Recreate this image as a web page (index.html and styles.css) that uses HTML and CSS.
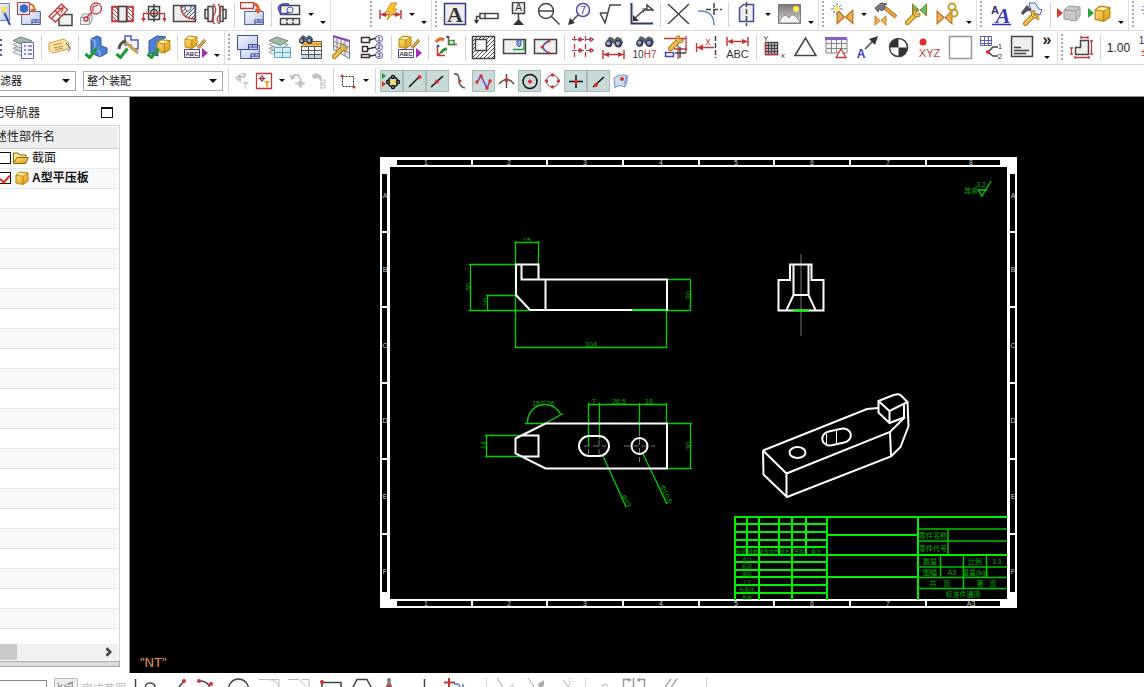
FILE: index.html
```html
<!DOCTYPE html>
<html lang="zh-CN">
<head>
    <meta charset="utf-8">
    <title>A型平压板</title>
    <link rel="stylesheet" href="styles.css">
</head>
<body>
    <!-- Shared icon parts -->
    <svg class="defs" width="0" height="0" aria-hidden="true">
        <defs>
            <linearGradient id="pale" x1="0" y1="0" x2="1" y2="1"><stop offset="0" stop-color="#f4f7ff"/><stop offset="1" stop-color="#b9c6e8"/></linearGradient>
            <linearGradient id="gold" x1="0" y1="0" x2="1" y2="1"><stop offset="0" stop-color="#ffe680"/><stop offset="1" stop-color="#dd9510"/></linearGradient>
            <linearGradient id="photo" x1="0" y1="0" x2="0" y2="1"><stop offset="0" stop-color="#777"/><stop offset="1" stop-color="#ddd"/></linearGradient>
            <pattern id="hatch" width="4" height="4" patternUnits="userSpaceOnUse"><path d="M-1 1L1 -1M0 4L4 0M3 5L5 3" stroke="#555" fill="none"/></pattern>
            <pattern id="hatch-red" width="4" height="4" patternUnits="userSpaceOnUse"><path d="M-1 3L1 5M0 0L4 4M3 -1L5 1" stroke="#c33" fill="none"/></pattern>
        </defs>
        <symbol id="sheet" viewBox="0 0 21 15"><path d="M.5 .5h20v14H.5z" fill="url(#pale)" stroke="#3c4a94"/><path d="M11.500 14V9.500h9M11.500 12h9M15.500 9.500v2.500" stroke="#3c4a94" fill="none"/></symbol>
        <symbol id="cube" viewBox="0 0 14 14"><path d="M1 4L5 1l8 1v8l-5 3.500L1 12z" fill="url(#gold)" stroke="#b8860b"/><path d="M1 4l7 1 5-3M8 5v8" stroke="#b8860b" fill="none"/><path d="M2 4l3.500-2 6 .8L8 4.500z" fill="#fff3b0"/></symbol>
        <symbol id="check" viewBox="0 0 14 12"><path d="M1.500 7l4 3.500L12.500 1.500" stroke="#1f9a32" stroke-width="3" fill="none"/></symbol>
        <symbol id="glasses" viewBox="0 0 23 14"><path d="M2 7L6 1l4 1 2 2 3-3 5 2 2 5-4 5-5-2-3-3-3 4-6-1z" fill="#59606c"/><circle cx="5.500" cy="9" r="4" fill="#343a46"/><circle cx="16.500" cy="9" r="4.200" fill="#343a46"/><circle cx="5" cy="8.500" r="2.300" fill="#8fa4d4"/><circle cx="16" cy="8.500" r="2.400" fill="#8fa4d4"/></symbol>
        <symbol id="wrench" viewBox="0 0 16 16"><path d="M2.500 13.500L9 7" stroke="#a77b17" stroke-width="5" stroke-linecap="round"/><path d="M2.500 13.500L9 7" stroke="#edc54c" stroke-width="3" stroke-linecap="round"/><path d="M9 1L8 5l3 3 4-1v-3l-3 1.500L10.500 4.500 12 1z" fill="#f2cf58" stroke="#a77b17"/></symbol>
        <symbol id="hammer" viewBox="0 0 24 17"><path d="M10 5l12 10" stroke="#996318" stroke-width="4"/><path d="M10 5l12 10" stroke="#e3a548" stroke-width="2.500"/><path d="M1 6l6-5 6 1-3 1 1 3-3 3-3-2-1 3z" fill="#777d86" stroke="#555"/></symbol>
        <symbol id="bow" viewBox="0 0 16 14"><path d="M1 1l6.500 6L1 13zM15 1L8.500 7l6.500 6z" fill="currentColor" stroke="#b76b1a"/></symbol>
        <symbol id="layers" viewBox="0 0 23 24"><path d="M1 18l8-4 12 4-8 5z" fill="#eee" stroke="#999"/><path d="M1 14l8-4 12 4-8 5z" fill="#cbd6ce" stroke="#8b968f"/><path d="M1 10l8-4 12 4-8 5z" fill="#eef2ef" stroke="#8b968f"/><path d="M1 6l8-4 12 4-8 5z" fill="#9fb8ab" stroke="#6f877b"/></symbol>
        <symbol id="dim" viewBox="0 0 23 9"><path d="M1 0v9M22 0v9M2 4.500h19" stroke="#bf3a36" stroke-width="1.500" fill="none"/><path d="M1 4.500L7 2v5zM22 4.500L16 2v5z" fill="#bf3a36"/></symbol>
        <symbol id="star" viewBox="0 0 12 12"><path d="M6 0v12M0 6h12M2 2l8 8M10 2l-8 8" stroke="#5d7c9b" fill="none"/><circle cx="6" cy="6" r="2.800" fill="#ffef7a"/></symbol>
        <symbol id="label" viewBox="0 0 25 25"><use href="#cube" x="1" y="0" width="14" height="14"/><path d="M15 13l7-8" stroke="#8c5a1b" stroke-width="3"/><path d="M15 13l7-8" stroke="#f0b458" stroke-width="1.500"/><path d="M1.500 14.500h15v8h-15z" fill="#fff" stroke="#5b3aa0"/><text x="9" y="21" class="tiny">ABC</text><path d="M19 13l6 5-6 5z" fill="#a033b0"/></symbol>
    </svg>

    <header>
        <div class="bar bar-top">
            <div class="group from-17">
                <button class="tool" aria-label="向导"><svg viewBox="0 0 25 25"><path d="M12.500 1.500h11v17h-11z" fill="url(#pale)" stroke="#7a86b8"/><path d="M17 8l7 15" stroke="#3b45b5" stroke-width="2"/><path d="M14 5h8l-4 7z" fill="#ffe15a"/></svg></button>
                <button class="tool" aria-label="基本视图"><svg viewBox="0 0 25 25"><use href="#sheet" x="4" y="9" width="20" height="14"/><path d="M.5 .5h12v12H.5z" fill="#dbe6f8" stroke="#c33"/><path d="M3 4l4-2 4 2v5l-4 2-4-2z" fill="#3b6cc0"/><path d="M13 2q5 1 4 6" stroke="#d9672c" stroke-width="2"/><path d="M13 7h7l-4 4z" fill="#d9672c"/></svg></button>
                <button class="tool" aria-label="投影视图"><svg viewBox="0 0 25 25"><path d="M11 23.500v-7l4-4h9v11z" fill="#f0f0f0" class="dark"/><path d="M1 14.500L13.500 2l6 6-12 12z" fill="#fff" class="red"/><path d="M7 8.500l6 6M4 16l12-12M10 6l5 1-2 4" class="red"/></svg></button>
                <button class="tool" aria-label="局部放大图"><svg viewBox="0 0 25 25"><path d="M1.500 15.500h9v7h-9zM2 15l2-3h9l-2 3M11 22l2-3v-7" fill="#eee" stroke="#999"/><circle cx="17" cy="6.500" r="5.500" fill="#f3f3f3" class="red"/><path d="M14 9V5l5-2M8 15l5-5" class="red"/><circle cx="7" cy="17" r="2" class="red"/></svg></button>
                <button class="tool" aria-label="剖视图"><svg viewBox="0 0 25 25"><path d="M2 4.500h21v15H2z" fill="#fff" class="red"/><path d="M2 5h6v14H2zM17 5h6v14h-6z" fill="url(#hatch-red)" class="red"/><path d="M8.500 4.500h8v15h-8z" fill="#eee" class="dark"/></svg></button>
                <button class="tool" aria-label="半剖视图"><svg viewBox="0 0 25 25"><path d="M7.500 4.500h11v13h-11z" fill="#eee" class="dark"/><circle cx="13" cy="11" r="3.500" class="dark"/><path d="M2.500 18v-6.500h21V18" class="red"/><path d="M0 16h5l-2.500 4zM21 16h5l-2.500 4z" class="fred"/><path d="M13 2v18" class="dark"/></svg></button>
                <button class="tool" aria-label="局部剖"><svg viewBox="0 0 25 25"><path d="M1.500 3.500h22v16h-22z" fill="#eee" class="dark"/><path d="M9 4q0 13 14 13V4h-4q0 5-3 5t-3-5z" fill="url(#hatch)" stroke="#3c5aa8"/><path d="M9 4q0 13 14 13" class="red"/></svg></button>
                <button class="tool" aria-label="断开视图"><svg viewBox="0 0 25 25"><path d="M2 7.500h3v9H2zM5 4.500h5v15H5zM17 4.500h3v15h-3zM20 7.500h3v9h-3z" fill="#eee" class="dark"/><path d="M10 2q5 5 1 11t1 9M15 2q5 5 1 11t1 9" class="red"/></svg></button>
                <i class="sep"></i>
                <button class="tool" aria-label="更新视图"><svg viewBox="0 0 25 25"><use href="#sheet" x="4" y="9" width="20" height="14"/><path d="M.5 .5h13v6H.5z" fill="#fff" class="red"/><path d="M14 2q5 1 4 7" stroke="#d9672c" stroke-width="3"/><path d="M14 7h8l-4 5z" fill="#d9672c"/></svg></button>
                <i class="sep"></i>
                <button class="tool" aria-label="编辑剖面"><svg viewBox="0 0 25 25"><path d="M3.500 3.500h19v9h-19zM3.500 16.500h19v6h-19z" fill="#f3f3f3" class="dark"/><path d="M10 17v6M16 17v6" class="dark" stroke-dasharray="2 1"/><path d="M12 2q-12-1-10 6t10 2" stroke="#4b50c4" stroke-width="2"/><circle cx="13" cy="8" r="3" stroke="#4b50c4"/></svg></button>
                <button class="drop" aria-label="更多"></button>
                <button class="drop low" aria-label="工具条选项"></button>
            </div>
            <div class="group after-gap">
                <i class="grip"></i>
                <button class="tool" aria-label="快速尺寸"><svg viewBox="0 0 25 25"><use href="#dim" x="1" y="8" width="23" height="9"/><path d="M13 1h6l-4 6h4L9 18l3-8H8z" fill="#ffc629" stroke="#d98a1c"/></svg></button>
                <button class="drop" aria-label="尺寸列表"></button>
                <button class="drop low" aria-label="工具条选项"></button>
            </div>
            <div class="group">
                <i class="grip"></i>
                <button class="tool" aria-label="注释"><svg viewBox="0 0 25 25"><path d="M1.500 1.500h21v21h-21z" fill="#eee" stroke="#3a3a8c" stroke-width="1.500"/><text x="12" y="20" class="serif">A</text></svg></button>
                <button class="tool" aria-label="特征控制框"><svg viewBox="0 0 25 25"><path d="M6 11.500h18v5H6zM11 11v5M2.500 21v-6.500H6" class="dark"/><path d="M0 18h5l-2.500 4z" class="fdark"/></svg></button>
                <button class="tool" aria-label="基准特征"><svg viewBox="0 0 25 25"><path d="M7.500 .5h12v11h-12z" fill="#eee" class="dark"/><text x="13.500" y="9" class="ten">A</text><path d="M13.500 12v8" class="dark"/><path d="M8 23l5.500-6 5.500 6z" class="fdark"/></svg></button>
                <button class="tool" aria-label="目标点"><svg viewBox="0 0 25 25"><circle cx="10" cy="9" r="7.500" class="dark"/><path d="M2 9h16M15.500 14.500l8 8" class="dark"/></svg></button>
                <button class="tool" aria-label="符号标注"><svg viewBox="0 0 25 25"><circle cx="16" cy="8" r="6.500" stroke="#4b50b4" stroke-width="1.500"/><text x="16" y="12" class="eleven blue">7</text><path d="M11 13l-8 8" class="dark"/><path d="M1 23l2-7 5 5z" class="fdark"/></svg></button>
                <button class="tool" aria-label="表面粗糙度"><svg viewBox="0 0 25 25"><path d="M2 11h8M2 11l5 10L12 3h11" class="dark"/></svg></button>
                <button class="tool" aria-label="焊接符号"><svg viewBox="0 0 25 25"><path d="M2.500 1v20.500H24" stroke="#333c60" stroke-width="2"/><path d="M6 16l9-8h9l-6-5v5" class="dark"/><path d="M4 19v-6l6 6z" class="fdark"/><text x="15" y="11" class="eight">7</text></svg></button>
                <i class="sep"></i>
                <button class="tool" aria-label="相交符号"><svg viewBox="0 0 25 25"><path d="M2 2l21 20M23 2L2 22" class="dark"/></svg></button>
                <button class="tool" aria-label="中心标记"><svg viewBox="0 0 25 25"><path d="M1 9q16-1 16 14" stroke="#5d84c4" stroke-width="1.500"/><path d="M17 1v14M9 7.500h16" class="dark" stroke-dasharray="5 2"/></svg></button>
                <i class="sep"></i>
                <button class="tool" aria-label="中心线"><svg viewBox="0 0 25 25"><path d="M5.500 19.500V6l4-3.500h10v17z" fill="#eee" stroke="#4548a0" stroke-width="1.500"/><path d="M12.500 0v24" class="dark" stroke-dasharray="5 2"/></svg></button>
                <button class="drop" aria-label="中心线列表"></button>
                <button class="tool" aria-label="图像"><svg viewBox="0 0 25 25"><path d="M1.500 2.500h22v19h-22z" fill="url(#photo)" stroke="#777"/><path d="M2 20q5-11 10-4 4-8 11 4v1H2z" fill="#f6f6f6" stroke="#888"/><circle cx="19" cy="7" r="3" fill="#ffe943"/></svg></button>
                <button class="drop low" aria-label="工具条选项"></button>
            </div>
            <div class="group">
                <i class="grip"></i>
                <button class="tool orange" aria-label="新建约束"><svg viewBox="0 0 25 25"><use href="#bow" x="6" y="7" width="18" height="16"/><use href="#star" x="1" y="1" width="12" height="12"/></svg></button>
                <button class="drop" aria-label="约束列表"></button>
                <button class="tool orange" aria-label="编辑约束"><svg viewBox="0 0 25 25"><use href="#bow" x="1" y="13" width="13" height="11"/><use href="#hammer" x="1" y="0" width="24" height="17"/></svg></button>
                <button class="tool green" aria-label="修复约束"><svg viewBox="0 0 25 25"><use href="#bow" x="7" y="1" width="17" height="14"/><use href="#wrench" x="1" y="7" width="16" height="16"/></svg></button>
                <button class="tool orange" aria-label="链接"><svg viewBox="0 0 25 25"><use href="#bow" x="1" y="8" width="17" height="15"/><circle cx="17" cy="5" r="3.500" stroke="#c9a02c" stroke-width="2"/><circle cx="19" cy="11" r="3.500" stroke="#c9a02c" stroke-width="2"/></svg></button>
                <button class="drop low" aria-label="工具条选项"></button>
            </div>
            <div class="group">
                <i class="grip"></i>
                <button class="tool" aria-label="文字样式"><svg viewBox="0 0 25 25"><text x="7" y="12" class="bold eleven navy">A</text><text x="15" y="21" class="serif italic blue">A</text><path d="M4 22.500h19" stroke="#3333c8" stroke-width="1.500"/></svg></button>
                <button class="tool" aria-label="编辑样式"><svg viewBox="0 0 25 25"><path d="M10 1h6l4 6 3 1-2 5-9-3z" fill="#e6edff" stroke="#4b5fd0"/><path d="M3 12l6-8M3 12q5-6 9-4" stroke="#555" stroke-width="3"/><path d="M12 9l8 9" stroke="#d8ad4a" stroke-width="3"/><use href="#wrench" x="4" y="8" width="16" height="16"/></svg></button>
                <i class="sep"></i>
                <button class="tool" aria-label="隐藏部件"><svg viewBox="0 0 25 25"><path d="M1 6l6 5-6 5z" fill="#d33"/><path d="M8 8l5-4 11 1v9l-4 5-12-2z" fill="#c9c9c9" stroke="#999"/><path d="M8 8l12 1 4-4M20 9v9" stroke="#999"/></svg></button>
                <button class="tool" aria-label="显示部件"><svg viewBox="0 0 25 25"><path d="M1 6l6 5-6 5z" fill="#26a53a"/><use href="#cube" x="7" y="3" width="17" height="17"/></svg></button>
                <button class="drop low" aria-label="工具条选项"></button>
            </div>
            <div class="group">
                <i class="grip"></i>
                <button class="tool" aria-label="新建"><svg viewBox="0 0 25 25"><use href="#star" x="1" y="2" width="12" height="12"/></svg></button>
            </div>
        </div>

        <div class="bar bar-mid">
            <div class="group from-24">
                <button class="tool" aria-label="列表"><svg viewBox="0 0 25 25"><path d="M14 5h9M14 10h9M14 15h9M14 20h9" stroke="#5a51a8" stroke-width="2"/></svg></button>
                <button class="tool" aria-label="图层设置"><svg viewBox="0 0 25 25"><use href="#layers" x="2" y="0" width="22" height="23"/><path d="M11.500 7.500h12v16h-12z" fill="#f4f4ff" stroke="#6b6fae"/><path d="M14 11h2M14 15h2M14 19h2M18 11h4M18 15h4M18 19h4" stroke="#6b6fae" stroke-width="1.500"/></svg></button>
                <i class="sep"></i>
                <button class="tool" aria-label="标签"><svg viewBox="0 0 25 25"><path d="M2 8l15-4 5 4-1 6-15 4-4-3z" fill="#fbe3a6" stroke="#c99f51"/><path d="M6 10l9-2M7 13l9-2M8 15l8-2" stroke="#b98e3f"/><path d="M19 8q7 6 2 8" stroke="#555"/></svg></button>
                <i class="sep"></i>
                <button class="tool" aria-label="检查部件"><svg viewBox="0 0 25 25"><path d="M7 4l6-3 4 2v8l6 2v5l-7 4-9-4z" fill="#4d80d2" stroke="#2c549b"/><path d="M7 4l4 2v8l5 3v5" stroke="#a9c6f4"/><use href="#check" x="0" y="12" width="14" height="12"/></svg></button>
                <button class="tool" aria-label="检查制图"><svg viewBox="0 0 25 25"><path d="M10 1h6v4h7v9h-6l-1-4h-6z" fill="#f4f6ff" stroke="#5358c8" stroke-width="1.500"/><path d="M9 6l14 12" stroke="#c9a152" stroke-width="3"/><path d="M4 14q1-7 7-8" stroke="#555" stroke-width="3"/><use href="#check" x="0" y="12" width="14" height="12"/></svg></button>
                <button class="tool" aria-label="检查装配"><svg viewBox="0 0 25 25"><path d="M3 6l8-5 9 1-8 6v13l-9-3z" fill="#4d80d2" stroke="#2c549b"/><use href="#cube" x="10" y="2" width="15" height="18"/><use href="#check" x="0" y="12" width="14" height="12"/></svg></button>
                <i class="sep"></i>
                <button class="tool" aria-label="属性"><svg viewBox="0 0 25 25"><use href="#label"/></svg></button>
                <button class="drop low" aria-label="工具条选项"></button>
            </div>
            <div class="group">
                <i class="grip"></i>
                <button class="tool" aria-label="新建图纸页"><svg viewBox="0 0 25 25"><use href="#sheet" x="4" y="10" width="20" height="14"/><use href="#sheet" x="1" y="0" width="21" height="15"/></svg></button>
                <button class="tool" aria-label="视图图层"><svg viewBox="0 0 25 25"><use href="#layers" x="1" y="0" width="22" height="23"/><path d="M7.500 12.500h16v10h-16zM15.500 12.500v10M7.500 17.500h16" fill="#d6effa" stroke="#59a7c6"/></svg></button>
                <button class="tool" aria-label="查找表"><svg viewBox="0 0 25 25"><path d="M3.500 6.500h20v17h-20z" fill="#fff" stroke="#555"/><path d="M3 7h20v4H3z" fill="#ffd34a"/><path d="M3 19h20v4H3z" fill="#bcd6f2"/><path d="M3 11.500h20M3 15.500h20M3 19.500h20M10.500 11v12M16.500 11v12" stroke="#555"/><path d="M4 9h19" stroke="#d62"/><use href="#glasses" x="0" y="-1" width="16" height="11"/></svg></button>
                <button class="tool" aria-label="网格设置"><svg viewBox="0 0 25 25"><path d="M4.500 1.500l16 5v17l-16-9z" fill="#eceaf4" stroke="#777"/><path d="M8 3v14M12 4v15M16 5v16M4 6l16 6M4 10l16 8" stroke="#888"/><path d="M4 1l17 5" stroke="#8b46c8" stroke-width="2"/><use href="#wrench" x="3" y="8" width="16" height="16"/></svg></button>
                <button class="tool" aria-label="自动编号"><svg viewBox="0 0 25 25"><path d="M1.500 2.500h8v5h-8zM2.500 11.500h5v5h-5zM1.500 19.500h8v3h-8zM10 5l6-2M8 14l8-2M10 21l6-1" stroke="#3d2c2c" stroke-width="1.500"/><circle cx="19" cy="4" r="3.500" class="violet"/><circle cx="19" cy="12" r="3.500" class="violet"/><circle cx="19" cy="20" r="3.500" class="violet"/><text x="19" y="6" class="tiny">1</text><text x="19" y="14" class="tiny">2</text><text x="19" y="22" class="tiny">3</text></svg></button>
                <i class="sep"></i>
                <button class="tool" aria-label="部件属性"><svg viewBox="0 0 25 25"><use href="#label"/></svg></button>
                <i class="sep"></i>
                <button class="tool" aria-label="坐标方位"><svg viewBox="0 0 25 25"><path d="M2 7q4-5 8-2" stroke="#e36a2c" stroke-width="3"/><path d="M14.500 1v8.500H23M3.500 12v8.500H11M4 20l7-6" stroke="#c33" stroke-width="1.500"/><path d="M15 5.500h5v4h-5z" stroke="#2a9a45" stroke-width="1.500"/><path d="M7 18q2-4 6-4" stroke="#2a9a45" stroke-width="3"/><path d="M13 0l3 3h-4zM2 12l2-3 2 3z" fill="#35a"/></svg></button>
                <i class="sep"></i>
                <button class="tool" aria-label="剖面线"><svg viewBox="0 0 25 25"><path d="M1.500 1.500h22v22h-22z" fill="url(#hatch)" class="dark"/><path d="M4.500 4.500h11v11h-11z" fill="#fff" class="dark"/></svg></button>
                <button class="tool" aria-label="隐藏线"><svg viewBox="0 0 25 25"><path d="M1.500 4.500h22v14h-22z" fill="#f1f1f1" class="dark"/><path d="M11 14.500h11V5" stroke="#29a03e" stroke-width="1.500"/><path d="M15 5h4v5l-2 2-2-2z" fill="#8ea2dd" stroke="#4450a8"/></svg></button>
                <button class="tool" aria-label="断面"><svg viewBox="0 0 25 25"><path d="M1.500 4.500h22v14h-22z" fill="#f1f1f1" class="dark"/><path d="M16 6q-12 6 0 12" stroke="#5149b8" stroke-width="1.500"/><circle cx="16" cy="6" r="1.500" class="fred"/><circle cx="9" cy="12" r="1.500" class="fred"/><circle cx="16" cy="18" r="1.500" class="fred"/></svg></button>
                <i class="sep"></i>
                <button class="tool" aria-label="孔阵列"><svg viewBox="0 0 25 25"><path d="M2 4.500h22M2 15.500h22" class="violet" stroke-dasharray="5 2"/><path d="M4.500 1v22M15.500 1v22" class="red" stroke-dasharray="5 3"/><circle cx="10" cy="4.500" r="1.500" class="red"/><circle cx="21" cy="4.500" r="1.500" class="red"/><circle cx="10" cy="15.500" r="1.500" class="red"/><circle cx="21" cy="15.500" r="1.500" class="red"/></svg></button>
                <button class="tool" aria-label="查找尺寸"><svg viewBox="0 0 25 25"><use href="#glasses" x="3" y="0" width="20" height="14"/><use href="#dim" x="1" y="15" width="23" height="9"/></svg></button>
                <button class="tool" aria-label="查找公差"><svg viewBox="0 0 25 25"><use href="#glasses" x="3" y="0" width="20" height="13"/><text x="12.500" y="23" class="ten">10<tspan class="tred">H7</tspan></text></svg></button>
                <button class="tool" aria-label="修复尺寸"><svg viewBox="0 0 25 25"><path d="M1 3.500h22M23 1v17M11 14h13M15 10v14" class="red"/><path d="M2.500 17.500h8v4h-8z" fill="#fff" stroke="#4448b0" stroke-width="1.500"/><path d="M12 18h11M17 12v11" class="dark"/><use href="#wrench" x="5" y="0" width="16" height="16"/></svg></button>
                <button class="tool" aria-label="坐标尺寸"><svg viewBox="0 0 25 25"><path d="M2.500 8v9M3 12.500h17" class="red"/><path d="M3 12.500l6-3v6z" class="fred"/><path d="M21.500 1v22" class="dark" stroke-dasharray="5 2"/><text x="14" y="10" class="ten tred">x</text></svg></button>
                <button class="tool" aria-label="文本尺寸"><svg viewBox="0 0 25 25"><use href="#dim" x="1" y="2" width="23" height="9"/><text x="12.500" y="23" class="eleven">ABC</text></svg></button>
                <i class="sep"></i>
                <button class="tool" aria-label="网格"><svg viewBox="0 0 25 25"><path d="M3.500 7.500h12v12h-12zM6.500 8v12M9.500 8v12M12.500 8v12M3 10.500h13M3 13.500h13M3 16.500h13" class="dark"/><path d="M3.500 7v12.500h13" class="red"/><text x="4" y="6" class="eight">Y</text><text x="21" y="23" class="eight">x</text></svg></button>
                <button class="tool" aria-label="三角形"><svg viewBox="0 0 25 25"><path d="M2 20.500L12.500 3 23 20.500z" class="dark"/></svg></button>
                <button class="tool" aria-label="表格注释"><svg viewBox="0 0 25 25"><path d="M2 4h21v14H2zM7.500 4v14M12.500 4v14M17.500 4v14M2 8.500h21M2 13.500h21" fill="#f3f3f3" stroke="#888"/><path d="M1 2h22v3H1z" fill="#8b5fd0"/><path d="M12 22.500L17 14l5 8.500z" fill="#fff" class="red"/></svg></button>
                <button class="tool" aria-label="文本指引"><svg viewBox="0 0 25 25"><text x="6" y="23" class="bold twelve blue">A</text><path d="M10 14l9-9" class="dark"/><path d="M23 1l-3 9-6-6z" class="fdark"/></svg></button>
                <button class="tool" aria-label="重心"><svg viewBox="0 0 25 25"><circle cx="12.500" cy="12.500" r="9" fill="#fff" class="dark"/><path d="M12.500 12.500v-9a9 9 0 0 0-9 9zM12.500 12.500v9a9 9 0 0 0 9-9z" class="fdark"/></svg></button>
                <button class="tool" aria-label="坐标"><svg viewBox="0 0 25 25"><circle cx="6" cy="7" r="3.500" class="fred"/><text x="12.500" y="22" class="eleven tred">XYZ</text></svg></button>
                <button class="tool" aria-label="矩形"><svg viewBox="0 0 25 25"><path d="M1.500 1.500h22v22h-22z" fill="#fff" stroke="#999" stroke-width="1.500"/></svg></button>
                <button class="tool" aria-label="零件明细"><svg viewBox="0 0 25 25"><path d="M1.500 1.500h11v9h-11zM5.500 2v8M9.500 2v8M1 5.500h11M1 8.500h11" stroke="#5b62bc"/><path d="M9 17l5-5h5M9 17l5 4h5" class="dark"/><circle cx="9" cy="17" r="2" class="fred"/><text x="21" y="14" class="eight">1</text><text x="21" y="24" class="eight">2</text></svg></button>
                <button class="tool" aria-label="技术要求"><svg viewBox="0 0 25 25"><path d="M1.500 1.500h21v20h-21z" fill="#eee" class="dark"/><path d="M4 12.500h7M4 15.500h15M4 18.500h12" class="dark"/></svg></button>
                <button class="more" aria-label="更多工具"><span>»</span></button>
            </div>
            <div class="group">
                <i class="grip"></i>
                <button class="tool" aria-label="尺寸标注"><svg viewBox="0 0 25 25"><path d="M6.500 19.500v-7h5v-7h8v14z" fill="#eee" class="dark"/><path d="M12 2.500h7M6 22.500h14M2.500 13v6M22.500 6v13M12 1v3M19 1v3M6 21v3M20 21v3M1 13h3M1 19h3M21 6h3M21 19h3" class="red"/></svg></button>
                <i class="sep"></i>
                <button class="tool wide-text">1.00</button>
                <button class="tool" aria-label="公差"><svg viewBox="0 0 25 25"><text x="6" y="9" class="ten">1.</text><text x="7" y="21" class="ten tred">±</text></svg></button>
            </div>
        </div>

        <div class="bar bar-select">
            <div class="combo filter">
                <select aria-label="选择过滤器"><option>无选择过滤器</option><option>曲线</option></select>
            </div>
            <div class="combo scope">
                <select aria-label="选择范围"><option>整个装配</option><option>仅在工作部件内部</option></select>
            </div>
            <i class="sep"></i>
            <button class="small" aria-label="重置过滤器"><svg viewBox="0 0 20 20"><path d="M5 6h6q4-3-2-3M3 7l4-3v6z" stroke="#bbb" stroke-width="1.500"/><path d="M9 11h7l-3 3v4h-1v-4z" fill="#ccc"/></svg></button>
            <button class="small" aria-label="细节过滤"><svg viewBox="0 0 20 20"><path d="M2.500 2.500h15v15h-15z" class="red"/><path d="M8 4v7M4.500 7.500h7" stroke="#844"/><circle cx="8" cy="7.500" r="2" stroke="#844"/><path d="M10 10h6l-2 3v3h-2v-3z" fill="#f0ac2c"/></svg></button>
            <button class="drop thin" aria-label="过滤列表"></button>
            <button class="small" aria-label="撤销选择"><svg viewBox="0 0 20 20"><path d="M4 7q1-4 6-3l2 3M2 4l2 4 3-2M12.500 7v10M7 12.500h10" stroke="#bbb" stroke-width="1.500"/><circle cx="12.500" cy="12.500" r="2.500" stroke="#bbb"/></svg></button>
            <button class="small" aria-label="选择零件"><svg viewBox="0 0 20 20"><path d="M3 4l4-2 6 3-1 5-3-3-5 1z" fill="#c4c4c4"/><path d="M12 9v9M12 9h4v3h-4M12 14h4v3h-4" stroke="#bbb"/></svg></button>
            <i class="sep"></i>
            <button class="small" aria-label="框选"><svg viewBox="0 0 20 20"><path d="M4.500 5.500h11v10h-11z" stroke="#333" stroke-dasharray="2 1"/><circle cx="4" cy="5" r="1.500" class="fred"/><circle cx="16" cy="16" r="1.500" class="fred"/></svg></button>
            <button class="drop thin" aria-label="选择方式"></button>
            <i class="sep"></i>
            <button class="snap on" aria-label="启用捕捉点"><svg viewBox="0 0 21 20"><path d="M1 2l4 3-4 3zM1 11" fill="#1d9b34"/><path d="M1 10l4 3-4 3z" class="fred"/><circle cx="12" cy="11" r="5" class="black"/><circle cx="12" cy="11" r="2.500" fill="#ffe04c"/><g fill="#eee" class="black"><circle cx="12" cy="6" r="1.500"/><circle cx="12" cy="16" r="1.500"/><circle cx="7" cy="11" r="1.500"/><circle cx="17" cy="11" r="1.500"/></g></svg></button>
            <button class="snap on" aria-label="端点"><svg viewBox="0 0 21 20"><path d="M5 16L15 6" class="black"/><circle cx="15.500" cy="6" r="2" class="fred"/></svg></button>
            <button class="snap on" aria-label="中点"><svg viewBox="0 0 21 20"><path d="M4 16L16 5" class="black"/><circle cx="10" cy="10.500" r="2" class="fred"/></svg></button>
            <button class="snap" aria-label="控制点"><svg viewBox="0 0 21 20"><path d="M4 3q5-1 5 6t6 8" stroke="#555" stroke-width="1.500"/><circle cx="10" cy="10" r="1.500" class="fred"/></svg></button>
            <button class="snap on" aria-label="极点"><svg viewBox="0 0 21 20"><path d="M4 11l4-6 6 12 3-7" stroke="#7d35c0" stroke-width="1.500"/><circle cx="4" cy="11" r="1.700" class="fred"/><circle cx="8" cy="5" r="1.700" class="fred"/><circle cx="14" cy="17" r="1.700" class="fred"/><circle cx="17" cy="10" r="1.700" class="fred"/></svg></button>
            <button class="snap" aria-label="交点"><svg viewBox="0 0 21 20"><path d="M3 13q8-9 15 0M10.500 3v14" stroke="#555" stroke-width="1.500"/><circle cx="10.500" cy="9" r="2" class="fred"/></svg></button>
            <button class="snap on" aria-label="圆心"><svg viewBox="0 0 21 20"><circle cx="11" cy="10.500" r="7" class="black"/><circle cx="11" cy="10.500" r="2" class="fred"/></svg></button>
            <button class="snap" aria-label="象限点"><svg viewBox="0 0 21 20"><circle cx="10.500" cy="10" r="6" stroke="#555"/><g class="fred"><circle cx="10.500" cy="4" r="1.700"/><circle cx="10.500" cy="16" r="1.700"/><circle cx="4.500" cy="10" r="1.700"/><circle cx="16.500" cy="10" r="1.700"/></g></svg></button>
            <button class="snap on" aria-label="现有点"><svg viewBox="0 0 21 20"><path d="M4 10.500h14M11 4v13" class="black"/><circle cx="11" cy="10.500" r="2" class="fred"/></svg></button>
            <button class="snap on" aria-label="曲线上的点"><svg viewBox="0 0 21 20"><path d="M5 16L16 6" class="black"/><circle cx="8" cy="14" r="2" class="fred"/></svg></button>
            <button class="snap" aria-label="面上的点"><svg viewBox="0 0 21 20"><path d="M3 7q6-5 14-2l-3 5v6q-6-3-10 1z" fill="#c9dcf3" stroke="#7393bf"/><path d="M14 6l3-1-1 8-2 3z" fill="#86a9d8"/><circle cx="11" cy="8" r="2" class="fred"/></svg></button>
        </div>
    </header>

    <main>
        <aside>
            <div class="nav-title">
                <h2>装配导航器</h2>
                <button class="maximize" aria-label="最大化"></button>
            </div>
            <div class="tree">
                <table>
                    <thead><tr><th>描述性部件名</th></tr></thead>
                    <tbody>
                        <tr><td><label><input type="checkbox"><svg class="node" viewBox="0 0 16 16"><path d="M.5 13V3h5l1.500 2h6v3" fill="#fbe48a" stroke="#8a6a10"/><path d="M.5 13.500L4 7.500h11.500l-3 6z" fill="url(#gold)" stroke="#8a6a10"/></svg>截面</label></td></tr>
                        <tr><td><label class="current"><input type="checkbox" checked><svg class="node" viewBox="0 0 16 16"><use href="#cube" x="2" y="1" width="14" height="14"/></svg>A型平压板</label></td></tr>
                        <tr><td></td></tr><tr><td></td></tr><tr><td></td></tr><tr><td></td></tr>
                        <tr><td></td></tr><tr><td></td></tr><tr><td></td></tr><tr><td></td></tr>
                        <tr><td></td></tr><tr><td></td></tr><tr><td></td></tr><tr><td></td></tr>
                        <tr><td></td></tr><tr><td></td></tr><tr><td></td></tr><tr><td></td></tr>
                        <tr><td></td></tr><tr><td></td></tr><tr><td></td></tr><tr><td></td></tr>
                        <tr><td></td></tr><tr><td></td></tr>
                    </tbody>
                </table>
                <div class="scroll"><span class="thumb"></span><button aria-label="向右滚动"><svg viewBox="0 0 8 8"><path d="M2 1l3 3-3 3" stroke="#444" stroke-width="2" fill="none"/></svg></button></div>
            </div>
            <div class="splitter"></div>
        </aside>

        <svg class="canvas" viewBox="130 97 1014 576" preserveAspectRatio="xMinYMin meet" role="img" aria-label="图纸">
            <!-- Drawing border with zone marks -->
            <path d="M380 157h637v451H380z" fill="#fff"/>
            <path d="M390 167h617v432H390z" fill="#000"/>
            <g class="zones">
                <path d="M397 160h603v5H397zM397 601h603v5H397zM382 174h5v418h-5zM1010 174h5v418h-5z" fill="#000"/>
                <path d="M472 158v8M547 158v8M623 158v8M699 158v8M774 158v8M850 158v8M926 158v8M472 600v8M547 600v8M623 600v8M699 600v8M774 600v8M850 600v8M926 600v8" class="mark"/>
                <path d="M381 232h8M381 307h8M381 383h8M381 459h8M381 534h8M1008 232h8M1008 307h8M1008 383h8M1008 459h8M1008 534h8" class="mark"/>
                <text x="426" y="165">1</text><text x="509" y="165">2</text><text x="585" y="165">3</text><text x="661" y="165">4</text><text x="736" y="165">5</text><text x="812" y="165">6</text><text x="888" y="165">7</text><text x="971" y="165">8</text>
                <text x="426" y="606">1</text><text x="509" y="606">2</text><text x="585" y="606">3</text><text x="661" y="606">4</text><text x="736" y="606">5</text><text x="812" y="606">6</text><text x="888" y="606">7</text><text x="971" y="606">A3</text>
                <text x="385" y="198">A</text><text x="385" y="272">B</text><text x="385" y="348">C</text><text x="385" y="423">D</text><text x="385" y="499">E</text><text x="385" y="574">F</text>
                <text x="1013" y="198">A</text><text x="1013" y="272">B</text><text x="1013" y="348">C</text><text x="1013" y="423">D</text><text x="1013" y="499">E</text><text x="1013" y="574">F</text>
            </g>

            <!-- Roughness note -->
            <g class="dims">
                <path d="M978 190h9M978 190l4 6 9-15"/>
                <text x="971" y="193">其余</text><text x="981" y="187">3.2</text>
            </g>

            <!-- Front view -->
            <g class="dims">
                <path d="M515.500 241v107M538.500 241v23M515 242.500h24M470.500 264v47M469 264.500h46M469 310.500h62M487.500 295v15M486 295.500h29M667 279.500h24M690.500 280v31M667 310.500h24M666.500 310v38M515 347.500h152"/>
                <text x="527" y="243">15</text><text x="591" y="347">104</text>
                <text transform="translate(471 287) rotate(-90)">30</text><text transform="translate(488 302) rotate(-90)">10</text><text transform="translate(691 295) rotate(-90)">20</text>
            </g>
            <path class="part" d="M530 310l-14-15v-30.500h22.500V279M521.500 265v14.500H667V310H530M545.500 280v30"/>
            <path class="hot" d="M632 310h34"/>

            <!-- Side view -->
            <path class="axis" d="M801 254v82"/>
            <path class="part" d="M778.500 280H790v-15.500h21.500V280h12v30.500h-45zM793.500 265v30h15v-30M793.500 295l-7 15M808.500 295l7 15"/>
            <path class="hot" d="M793 310.500h16"/>

            <!-- Top view -->
            <path class="axis" stroke-dasharray="6 3" d="M584 446h22M588.500 440v14M599 440v14M624 446h31M639.500 430v32"/>
            <g class="dims">
                <path d="M588.500 403v42M599.500 403v36M639.500 403v27M666.500 403v20M588 404.500h79M667 423.500h25M667 468.500h25M690.500 423v46M485 435.500h37M485 456.500h37M486.500 435v22M525 423.500h20l18-10M527.500 423a17.500 17.500 0 0 1 33-9M603 456l23 51M643 454l24 50"/>
                <text x="594" y="404">7</text><text x="619" y="404">26.5</text><text x="649" y="404">18</text><text x="544" y="406">153°26'</text>
                <text transform="translate(486 445) rotate(-90)">14</text><text transform="translate(691 446) rotate(-90)">30</text>
                <text transform="translate(624 502) rotate(65)">Φ13</text><text transform="translate(664 495) rotate(65)">Φ10.5</text>
            </g>
            <path class="part" d="M515.500 438.500l30-15H667v45H545.500l-30-15zM522 435.500h16.500v21H522"/>
            <rect class="part" x="579" y="436" width="30" height="20" rx="10"/>
            <circle class="part" cx="639.500" cy="446" r="8"/>

            <!-- Isometric view -->
            <path class="part" d="M763 450.500L867 409l11-1M763 450.500l23.500 23L890 432l15-15M763 450.500l.5 24L787 497l104-40.500 9.500-9.500 8-21-1-24M786.500 473.500V497M890 432l1 24.500"/>
            <path class="part" d="M878.500 401l12.500-5q7-3 10-.5l6.500 6.500-18 9zM878.500 401v11.500l11 10.500 14.500-5.500V404M889.500 411v12"/>
            <ellipse class="part" cx="797.500" cy="452.500" rx="8" ry="5.500"/>
            <rect class="part" x="822" y="430" width="29" height="14" rx="8" transform="rotate(-12 836.500 437)"/>
            <path d="M826.500 434v10M836.500 431v12" stroke="#fff" fill="none"/>

            <!-- Title block -->
            <g class="block">
                <path d="M735 600v-83h272M747 517v38M759 517v83M779 517v38M792 517v83M806 517v38M827 517v83M918 517v83M735 524h92M735 532h92M735 540h92M735 547h92M735 555h272M735 562h92M735 570h92M735 577h92M735 585h92M735 593h92M827 535h91M827 577h91"/>
                <path class="fine" d="M918 529h89M918 541h89M918 567h89M918 577.500h89M918 588.500h89M948 529v25M940.500 555v22M963.500 555v33M986.500 555v22"/>
                <text x="933" y="538">零件名称</text><text x="933" y="551">零件代号</text><text x="930" y="564">数量</text><text x="975" y="564">比例</text><text x="997" y="564">1:1</text>
                <text x="930" y="575">图幅</text><text x="952" y="575">A3</text><text x="975" y="575">重量(kg)</text>
                <text x="933" y="586">共</text><text x="947" y="586">页</text><text x="980" y="586">第</text><text x="993" y="586">页</text><text x="963" y="597">标准件通用</text>
                <g class="mini">
                    <text x="741" y="553">标记</text><text x="753" y="553">处数</text><text x="769" y="553">更改文件</text><text x="785" y="553">签名</text><text x="799" y="553">日期</text><text x="816" y="553">备注</text>
                    <text x="747" y="561">设计</text><text x="747" y="568">校对</text><text x="747" y="576">审核</text><text x="747" y="584">工艺</text><text x="747" y="591">标准化</text><text x="747" y="599">批准</text>
                </g>
            </g>
            <text x="140" y="667" class="view-name">"NT"</text>
        </svg>
    </main>

    <footer>
        <input type="text" class="sketch-name" aria-label="草图名">
        <button class="finish"><svg viewBox="0 0 25 25"><path d="M.5 .5h23v23H.5z" fill="#eee" stroke="#bbb"/><path d="M3 4l6 3 10-4v10l-10 3-3-2z" fill="#999"/><path d="M5 5l3 4 4-3 3 3 4-4" stroke="#eee" stroke-width="2" stroke-dasharray="3 2"/></svg>完成草图</button>
        <button class="tool" aria-label="轮廓"><svg viewBox="0 0 25 25"><path d="M2.500 1v20h7M13 12q-2-7 4-7t5 7" class="dark"/></svg></button>
        <button class="tool" aria-label="直线"><svg viewBox="0 0 25 25"><path d="M4 22L20 3" class="dark"/><circle cx="20" cy="3" r="2" class="fred"/></svg></button>
        <button class="tool" aria-label="圆弧"><svg viewBox="0 0 25 25"><path d="M4 3q12-1 12 15" class="dark"/><circle cx="4" cy="3" r="2" class="fred"/><circle cx="16" cy="6" r="2" class="fred"/></svg></button>
        <button class="tool" aria-label="圆"><svg viewBox="0 0 25 25"><circle cx="12.500" cy="11" r="10" class="dark"/></svg></button>
        <button class="tool" aria-label="圆角"><svg viewBox="0 0 25 25"><path d="M2 1.500h9q11 0 11 11M14 1.500h8v8" stroke="#bbb"/></svg></button>
        <button class="tool" aria-label="倒斜角"><svg viewBox="0 0 25 25"><path d="M0 1.500h11l10 10M14 1.500h7v8" stroke="#bbb"/></svg></button>
        <button class="tool" aria-label="矩形"><svg viewBox="0 0 25 25"><path d="M3 4.500h19v14H3z" class="dark"/><circle cx="3" cy="4" r="2" class="fred"/></svg></button>
        <button class="tool" aria-label="多边形"><svg viewBox="0 0 25 25"><path d="M2 11l5-9.500h10l5 9.500-5 9H7z" class="dark"/></svg></button>
        <button class="tool" aria-label="艺术样条"><svg viewBox="0 0 25 25"><circle cx="8" cy="2" r="2" fill="#777"/><path d="M8 3L4 14M8 3l4 11" stroke="#777" stroke-width="2"/><circle cx="8" cy="8" r="1.500" class="fred"/></svg></button>
        <button class="tool" aria-label="点"><svg viewBox="0 0 25 25"><path d="M12.500 1v22M2 12h21" class="dark"/></svg></button>
        <button class="tool" aria-label="偏置曲线"><svg viewBox="0 0 25 25"><path d="M6 0v11M1 4.500h11" stroke="#bf3a36" stroke-width="2"/><path d="M11 6h4q4 3 0 10M20 6v9" stroke="#5873c6" stroke-width="1.500"/></svg></button>
        <button class="drop low" aria-label="曲线列表"></button>
        <i class="sep"></i>
        <button class="tool" aria-label="修剪"><svg viewBox="0 0 25 25"><path d="M5 0l10 15" stroke="#aaa"/><path d="M17 8l5-3v6z" fill="#ddd"/></svg></button>
        <button class="tool" aria-label="延伸"><svg viewBox="0 0 25 25"><path d="M5 0l10 15" stroke="#aaa"/><path d="M15 6l6-4v5l-4 5z" fill="#aaa"/></svg></button>
        <button class="tool" aria-label="拐角"><svg viewBox="0 0 25 25"><path d="M9 2l6 7" stroke="#aaa"/><path d="M15.500 0v20" stroke="#aaa" stroke-dasharray="1 2"/></svg></button>
        <i class="sep"></i>
        <button class="tool" aria-label="约束"><svg viewBox="0 0 25 25"><path d="M11 8l3-2 3 2" stroke="#aaa"/></svg></button>
        <button class="tool" aria-label="对称"><svg viewBox="0 0 25 25"><path d="M1.500 12V1.500h7M11.500 0v12M22.500 12V1.500h-7" stroke="#999" stroke-width="1.500"/><path d="M6 0l4 2-4 2zM18 0l-4 2 4 2z" fill="#999"/></svg></button>
        <button class="tool" aria-label="平行"><svg viewBox="0 0 25 25"><path d="M8 15L18 1M14 15L24 1" stroke="#aaa" stroke-width="1.500"/></svg></button>
        <button class="drop low" aria-label="约束列表"></button>
        <i class="sep last"></i>
    </footer>
</body>
</html>
```
FILE: styles.css
```css
* {
    box-sizing: border-box;
}

body {
    margin: 0;
    height: 100vh;
    display: flex;
    flex-direction: column;
    overflow: hidden;
    background: #fff;
    color: #222;
    font-family: "Liberation Sans", "Noto Sans CJK SC", sans-serif;
    font-size: 12px;
}

button {
    padding: 0;
    border: none;
    background: none;
    color: inherit;
    font: inherit;
    flex-shrink: 0;
}

svg {
    fill: none;
    display: block;
}

.defs {
    position: absolute;
}

/* Toolbars */
.bar {
    display: flex;
    overflow: hidden;
}

.bar-top {
    height: 31px;
    border-bottom: 1px solid #dcdcdc;
}

.bar-mid {
    height: 34px;
    border-bottom: 1px solid #dcdcdc;
}

.bar-select {
    height: 31px;
    align-items: center;
}

.group {
    display: flex;
    flex-shrink: 0;
    align-items: center;
    border-right: 1px solid #dcdcdc;
}

.bar-top .group {
    padding-bottom: 2px;
}

.group:last-child {
    border-right: none;
}

.from-17 {
    margin-left: -17px;
}

.from-24 {
    margin-left: -24px;
}

.bar-top .group,
.bar-mid .group {
    padding-right: 1px;
}

.after-gap {
    margin-left: 36px;
}

.grip {
    width: 8px;
    height: 27px;
    flex-shrink: 0;
    background: repeating-linear-gradient(#aaa 0 2px, #fff 2px 4px) 3px 0 / 2px 100% no-repeat;
}

.sep {
    width: 6px;
    height: 25px;
    flex-shrink: 0;
    background: linear-gradient(#d4d4d4, #d4d4d4) 3px 0 / 1px 100% no-repeat;
}

.tool {
    width: 31px;
    padding: 0 3px;
}

.tool svg {
    width: 25px;
    height: 25px;
}

.wide-text {
    font-size: 12px;
    text-align: center;
}

.orange {
    color: #f3ad50;
}

.green {
    color: #47cc60;
}

.drop {
    width: 12px;
    height: 25px;
    display: flex;
    align-items: center;
    justify-content: center;
}

.drop::before,
.more::after {
    content: "";
    border: 3px solid transparent;
    border-top-color: #111;
    border-bottom: none;
}

.drop.low {
    align-items: flex-end;
    padding-bottom: 3px;
}

.drop.thin {
    width: 13px;
}

.more {
    width: 18px;
    height: 27px;
    display: flex;
    flex-direction: column;
    align-items: center;
    justify-content: space-between;
    padding-bottom: 2px;
    font-size: 16px;
    font-weight: bold;
    line-height: 12px;
}

/* Icon strokes and fills */
.dark { stroke: #444; stroke-width: 1.5; }
.black { stroke: #111; stroke-width: 1.5; }
.red { stroke: #c43a3a; stroke-width: 1.3; }
.violet { stroke: #5b4eb0; }
.fdark { fill: #333; }
.fred { fill: #dc3028; }

svg text {
    fill: #333;
    text-anchor: middle;
}

svg .tiny { font-size: 6px; font-weight: bold; }
svg .eight { font-size: 8px; }
svg .ten { font-size: 10px; }
svg .eleven { font-size: 11px; }
svg .twelve { font-size: 12px; }
svg .bold { font-weight: bold; }
svg .italic { font-style: italic; }
svg .serif { font: bold 22px "Liberation Serif", serif; }
svg .serif.italic { font-style: italic; }
svg .blue { fill: #3a3ab8; }
svg .navy { fill: #38306c; }
svg .tred { fill: #c43a3a; }

/* Selection bar */
.combo {
    position: relative;
    flex-shrink: 0;
    height: 20px;
}

.combo select {
    width: 100%;
    height: 20px;
    padding: 0 3px;
    border: 1px solid #a6a6a6;
    border-radius: 0;
    background: #fff;
    color: #111;
    appearance: none;
    font: 11px "Liberation Sans", "Noto Sans CJK SC", sans-serif;
}

.combo::after {
    content: "";
    position: absolute;
    right: 6px;
    top: 8px;
    border: 4px solid transparent;
    border-top-color: #111;
    border-bottom: none;
    pointer-events: none;
}

.filter {
    width: 124px;
    margin: 0 7px 0 -48px;
}

.scope {
    width: 140px;
    margin-right: 2px;
}

.bar-select .sep {
    width: 8px;
}

.small {
    width: 21px;
}

.small svg {
    width: 20px;
    height: 20px;
}

.snap {
    width: 23px;
    height: 22px;
    border: 1px solid transparent;
}

.snap.on {
    background: #c9d9d7;
    border-color: #a3bdb9;
}

.snap svg {
    width: 21px;
    height: 20px;
}

/* Work area */
main {
    flex: 1;
    min-height: 0;
    display: flex;
    border-top: 1px solid #868c92;
}

aside {
    width: 130px;
    flex-shrink: 0;
    display: flex;
    flex-direction: column;
    padding-bottom: 6px;
    overflow: hidden;
    border-right: 1px solid #868c92;
}

.nav-title {
    height: 28px;
    flex-shrink: 0;
    display: flex;
    align-items: center;
    justify-content: space-between;
    margin-left: -20px;
    padding-right: 16px;
}

.nav-title h2 {
    margin: 0;
    font-size: 12px;
    font-weight: normal;
}

.maximize {
    width: 12px;
    height: 11px;
    margin-top: 3px;
    border: 1px solid #111;
    border-top-width: 2px;
}

.tree {
    flex: 1;
    min-height: 0;
    display: flex;
    flex-direction: column;
    margin-right: 9px;
    padding: 1px 1px 0 0;
    border-top: 1px solid #d4d4d4;
    border-right: 1px solid #d4d4d4;
}

table {
    width: 100%;
    border-collapse: collapse;
}

th {
    height: 21px;
    padding: 0;
    background: #eee;
    border-bottom: 1px solid #ccc;
    font-weight: normal;
    text-align: left;
    text-indent: -17px;
    line-height: 18px;
}

td {
    height: 20px;
    padding: 0;
    border-bottom: 1px solid #e6e6e6;
    line-height: 18px;
}

tr:nth-child(even) td {
    background: #f9f9f9;
}

td label {
    display: flex;
    align-items: center;
    color: #111;
}

td .current {
    font-weight: bold;
}

td input {
    width: 12px;
    height: 12px;
    flex-shrink: 0;
    margin: 0 2px 0 -1px;
    appearance: none;
    border: 1px solid #111;
    background: #fff;
    display: flex;
    justify-content: center;
}

td input:checked::before {
    content: "";
    width: 4px;
    height: 8px;
    border: solid #e02020;
    border-width: 0 2px 2px 0;
    transform: rotate(42deg);
}

.node {
    width: 16px;
    height: 16px;
    margin-right: 3px;
}

.scroll {
    height: 16px;
    flex-shrink: 0;
    margin: auto 0 1px;
    display: flex;
    justify-content: space-between;
    background: #f0f0f0;
}

.thumb {
    width: 17px;
    background: #c8c8c8;
}

.scroll button {
    width: 16px;
    padding-left: 2px;
}

.scroll svg {
    width: 10px;
    height: 10px;
}

.splitter {
    height: 6px;
    flex-shrink: 0;
    margin-right: 9px;
    border: 1px solid #aaa;
    border-left: none;
    background: #dcdcdc;
}

/* Drawing */
.canvas {
    flex: 1;
    min-width: 0;
    height: 100%;
    background: #000;
}

.canvas text {
    font-size: 7px;
}

.canvas .mark {
    stroke: #fff;
    stroke-width: 2;
}

.canvas .zones text {
    fill: #ccc;
}

.part {
    stroke: #fff;
    stroke-width: 2;
}

.hot {
    stroke: #00ff00;
    stroke-width: 2;
}

.axis {
    stroke: #777;
}

.dims path {
    stroke: #00d200;
    stroke-width: 1.3;
}

.canvas .dims text,
.canvas .block text {
    fill: #00b400;
}

.block path {
    stroke: #00f000;
    stroke-width: 2;
}

.block .fine {
    stroke: #00c400;
    stroke-width: 1.5;
}

.canvas .mini text {
    font-size: 5px;
}

.canvas .view-name {
    fill: #f09a48;
    font-size: 13px;
    text-anchor: start;
}

/* Sketch toolbar */
footer {
    height: 14px;
    flex-shrink: 0;
    display: flex;
    align-items: flex-start;
    overflow: hidden;
    padding-top: 5px;
}

.sketch-name {
    width: 47px;
    height: 22px;
    flex-shrink: 0;
    margin-top: 2px;
    border: 1px solid #888;
    border-left: none;
}

.finish {
    display: flex;
    align-items: flex-start;
    gap: 3px;
    width: 83px;
    padding-left: 7px;
    color: #bbb;
    font-size: 11px;
    line-height: 22px;
    white-space: nowrap;
}

.finish svg {
    width: 25px;
    height: 25px;
    flex-shrink: 0;
}

.last {
    margin-left: 10px;
}
```
